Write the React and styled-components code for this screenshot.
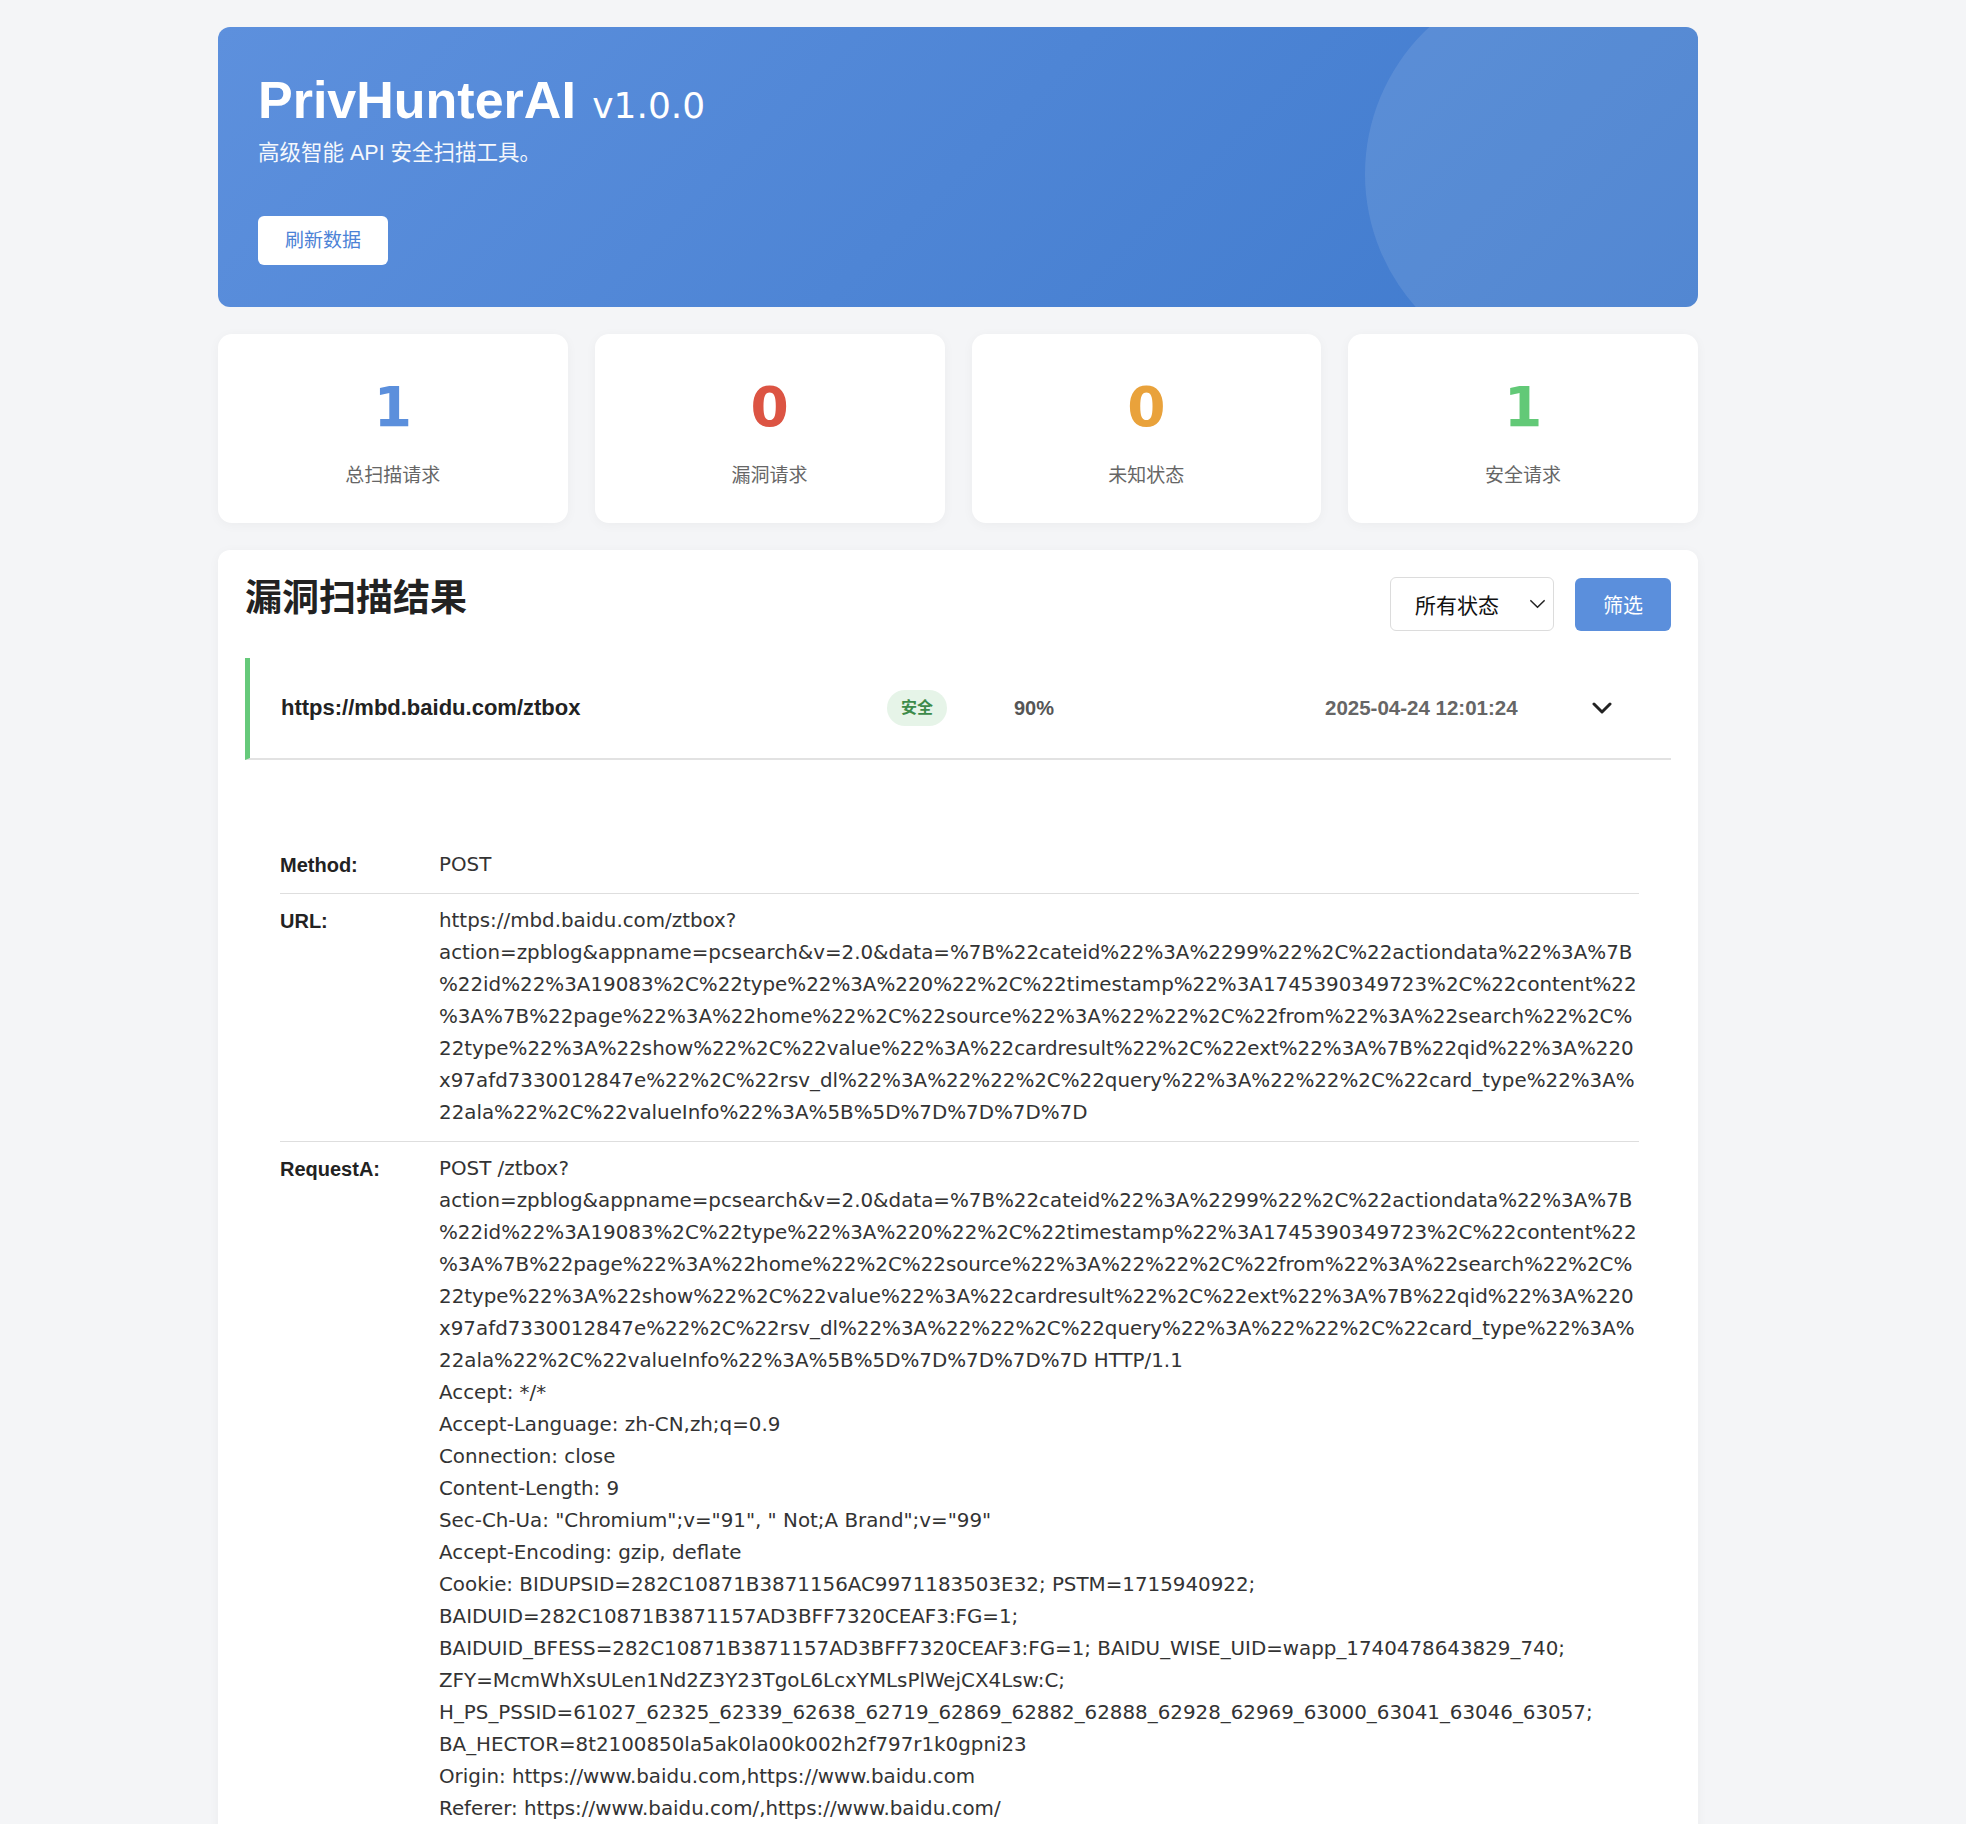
import React from "react";
import styled, { createGlobalStyle } from "styled-components";

const GlobalStyle = createGlobalStyle`
  body {
    margin: 0;
    background: #f4f5f7;
    font-family: "Liberation Sans", "Noto Sans CJK SC", sans-serif;
    color: #333;
  }
`;

const Page = styled.div`
  padding: 27px 268px 60px 218px;
`;

const Container = styled.div`
  width: 1480px;
  display: flex;
  flex-direction: column;
  gap: 27px;
`;

const Hero = styled.header`
  position: relative;
  overflow: hidden;
  box-sizing: border-box;
  height: 280px;
  padding: 43px 40px 0;
  border-radius: 12px;
  background: linear-gradient(135deg, #5d90dd 0%, #3f7acd 100%);
  color: #fff;

  &::after {
    content: "";
    position: absolute;
    width: 400px;
    height: 400px;
    top: -53px;
    right: -67px;
    border-radius: 50%;
    background: rgba(255, 255, 255, 0.1);
  }
`;

const Title = styled.h1`
  margin: 0;
  font-size: 52px;
  line-height: 60px;
  font-weight: 700;
`;

const Version = styled.span`
  margin-left: 2px;
  font-family: "DejaVu Sans", sans-serif;
  font-size: 36px;
  font-weight: 400;
  line-height: 1;
`;

const Subtitle = styled.p`
  margin: 8px 0 0;
  font-size: 21.5px;
  line-height: 31px;
  opacity: 0.94;
`;

const RefreshButton = styled.button`
  margin-top: 47px;
  padding: 11px 27px;
  border: none;
  border-radius: 6px;
  background: #fff;
  color: #4c82d6;
  font-family: inherit;
  font-size: 19px;
  line-height: 27px;
  cursor: pointer;
`;

const StatGrid = styled.div`
  display: grid;
  grid-template-columns: repeat(4, 1fr);
  gap: 27px;
`;

const StatCard = styled.div`
  padding: 40px 20px 34px;
  border-radius: 14px;
  background: #fff;
  text-align: center;
  box-shadow: 0 2px 12px rgba(0, 0, 0, 0.04);
`;

const StatValue = styled.div`
  font-family: "DejaVu Sans", sans-serif;
  font-size: 55px;
  line-height: 66px;
  font-weight: 700;
  color: ${(p) => p.color};
`;

const StatLabel = styled.div`
  margin-top: 22px;
  font-size: 19px;
  line-height: 27px;
  color: #666;
`;

const Section = styled.section`
  padding: 27px 27px 60px;
  border-radius: 12px;
  background: #fff;
  box-shadow: 0 2px 12px rgba(0, 0, 0, 0.04);
`;

const SectionHeader = styled.div`
  display: flex;
  justify-content: space-between;
  align-items: flex-start;
  margin-bottom: 27px;
`;

const SectionTitle = styled.h2`
  margin: 0;
  font-size: 37px;
  line-height: 44px;
  font-weight: 700;
  color: #222;
`;

const Controls = styled.div`
  display: flex;
  align-items: center;
  gap: 21px;
`;

const SelectBox = styled.div`
  box-sizing: border-box;
  width: 164px;
  height: 54px;
  padding: 0 7px 0 24px;
  display: flex;
  align-items: center;
  justify-content: space-between;
  border: 1.5px solid #dcdcdc;
  border-radius: 6px;
  background: #fff;
  font-size: 21px;
  color: #111;
`;

const FilterButton = styled.button`
  width: 96px;
  height: 53px;
  border: none;
  border-radius: 6px;
  background: #5b8fdc;
  color: #fff;
  font-family: inherit;
  font-size: 20px;
  cursor: pointer;
`;

const ResultRow = styled.div`
  display: grid;
  grid-template-columns: minmax(0, 1fr) 127px 311px 267px 20px;
  align-items: center;
  padding: 32px 59px 32px 31px;
  border-left: 5px solid ${(p) => p.accent};
  border-bottom: 2px solid #e2e2e2;
`;

const RowUrl = styled.div`
  font-size: 22px;
  font-weight: 700;
  color: #222;
`;

const Badge = styled.span`
  justify-self: start;
  height: 36px;
  padding: 0 14px;
  border-radius: 18px;
  background: #e6f4e8;
  color: #3d8b4a;
  font-size: 16px;
  line-height: 36px;
  font-weight: 700;
`;

const RowMeta = styled.div`
  font-size: ${(p) => p.size || "20px"};
  font-weight: 700;
  color: ${(p) => p.tone || "#555"};
`;

const Detail = styled.div`
  padding: 78px 32px 0 35px;
`;

const DetailRow = styled.div`
  display: grid;
  grid-template-columns: 159px minmax(0, 1fr);
  padding: 11px 0 12px;
  border-bottom: 1px solid #dedede;

  &:last-child {
    border-bottom: none;
  }
`;

const DetailLabel = styled.div`
  font-size: 20px;
  line-height: 32px;
  font-weight: 700;
  color: #222;
`;

const DetailValue = styled.div`
  font-family: "DejaVu Sans", "Noto Sans CJK SC", sans-serif;
  font-size: 19.85px;
  line-height: 32px;
  color: #333;
  white-space: pre-wrap;
  overflow-wrap: break-word;
`;

const Chevron = ({ width, height, stroke, color }) => (
  <svg width={width} height={height} viewBox="0 0 20 12" fill="none">
    <polyline
      points="2,2 10,10 18,2"
      stroke={color}
      strokeWidth={stroke}
      strokeLinecap="round"
      strokeLinejoin="round"
    />
  </svg>
);

// allow a line break right after the query "?" like the browser did
const softBreak = (text) =>
  text.split("?").flatMap((part, i) => (i === 0 ? [part] : ["?", <wbr key={i} />, part]));

const query =
  "action=zpblog&appname=pcsearch&v=2.0&data=%7B%22cateid%22%3A%2299%22%2C%22actiondata%22%3A%7B%22id%22%3A19083%2C%22type%22%3A%220%22%2C%22timestamp%22%3A1745390349723%2C%22content%22%3A%7B%22page%22%3A%22home%22%2C%22source%22%3A%22%22%2C%22from%22%3A%22search%22%2C%22type%22%3A%22show%22%2C%22value%22%3A%22cardresult%22%2C%22ext%22%3A%7B%22qid%22%3A%220x97afd7330012847e%22%2C%22rsv_dl%22%3A%22%22%2C%22query%22%3A%22%22%2C%22card_type%22%3A%22ala%22%2C%22valueInfo%22%3A%5B%5D%7D%7D%7D%7D";

const result = {
  url: "https://mbd.baidu.com/ztbox",
  status: "安全",
  confidence: "90%",
  time: "2025-04-24 12:01:24",
  method: "POST",
  fullUrl: `https://mbd.baidu.com/ztbox?${query}`,
  request: [
    `POST /ztbox?${query} HTTP/1.1`,
    "Accept: */*",
    "Accept-Language: zh-CN,zh;q=0.9",
    "Connection: close",
    "Content-Length: 9",
    'Sec-Ch-Ua: "Chromium";v="91", " Not;A Brand";v="99"',
    "Accept-Encoding: gzip, deflate",
    "Cookie: BIDUPSID=282C10871B3871156AC9971183503E32; PSTM=1715940922; BAIDUID=282C10871B3871157AD3BFF7320CEAF3:FG=1; BAIDUID_BFESS=282C10871B3871157AD3BFF7320CEAF3:FG=1; BAIDU_WISE_UID=wapp_1740478643829_740; ZFY=McmWhXsULen1Nd2Z3Y23TgoL6LcxYMLsPlWejCX4Lsw:C; H_PS_PSSID=61027_62325_62339_62638_62719_62869_62882_62888_62928_62969_63000_63041_63046_63057; BA_HECTOR=8t2100850la5ak0la00k002h2f797r1k0gpni23",
    "Origin: https://www.baidu.com,https://www.baidu.com",
    "Referer: https://www.baidu.com/,https://www.baidu.com/",
  ].join("\n"),
};

const stats = [
  { value: 1, label: "总扫描请求", color: "#5b8fdc" },
  { value: 0, label: "漏洞请求", color: "#dc5443" },
  { value: 0, label: "未知状态", color: "#e9a23b" },
  { value: 1, label: "安全请求", color: "#62c977" },
];

export default function App() {
  return (
    <Page>
      <GlobalStyle />
      <Container>
        <Hero>
          <Title>
            PrivHunterAI <Version>v1.0.0</Version>
          </Title>
          <Subtitle>高级智能 API 安全扫描工具。</Subtitle>
          <RefreshButton>刷新数据</RefreshButton>
        </Hero>

        <StatGrid>
          {stats.map((s) => (
            <StatCard key={s.label}>
              <StatValue color={s.color}>{s.value}</StatValue>
              <StatLabel>{s.label}</StatLabel>
            </StatCard>
          ))}
        </StatGrid>

        <Section>
          <SectionHeader>
            <SectionTitle>漏洞扫描结果</SectionTitle>
            <Controls>
              <SelectBox>
                所有状态
                <Chevron width={17} height={10} stroke={1.8} color="#222" />
              </SelectBox>
              <FilterButton>筛选</FilterButton>
            </Controls>
          </SectionHeader>

          <ResultRow accent="#66c97a">
            <RowUrl>{result.url}</RowUrl>
            <Badge>{result.status}</Badge>
            <RowMeta>{result.confidence}</RowMeta>
            <RowMeta size="20.5px" tone="#666">{result.time}</RowMeta>
            <Chevron width={20} height={12} stroke={3} color="#222" />
          </ResultRow>

          <Detail>
            <DetailRow>
              <DetailLabel>Method:</DetailLabel>
              <DetailValue>{result.method}</DetailValue>
            </DetailRow>
            <DetailRow>
              <DetailLabel>URL:</DetailLabel>
              <DetailValue>{softBreak(result.fullUrl)}</DetailValue>
            </DetailRow>
            <DetailRow>
              <DetailLabel>RequestA:</DetailLabel>
              <DetailValue>{softBreak(result.request)}</DetailValue>
            </DetailRow>
          </Detail>
        </Section>
      </Container>
    </Page>
  );
}
